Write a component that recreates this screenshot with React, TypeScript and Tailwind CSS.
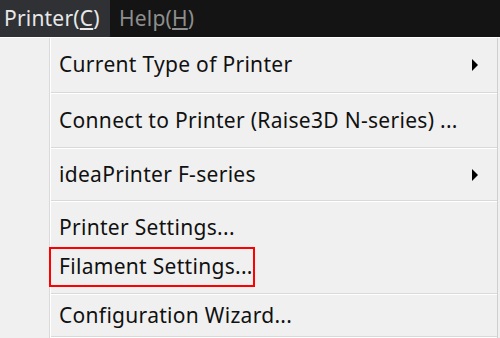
import React from "react";

const Arrow = () => (
  <svg width="8" height="12" viewBox="0 0 8 12" className="mr-[18px]">
    <path d="M1 0 L7 6 L1 12 Z" fill="#000" />
  </svg>
);

const Sep = () => (
  <div className="flex flex-col">
    <div className="h-px bg-[#d9d9d9]" />
    <div className="h-px bg-white" />
  </div>
);

export default function App() {
  return (
    <div
      className="w-[500px] h-[338px] overflow-hidden bg-[#f0f0f0] text-[#111]"
      style={{ fontFamily: '"Noto Sans", "Open Sans", sans-serif' }}
    >
      <div className="flex h-[37px] bg-[#141414] text-[21px] tracking-[0.2px] items-stretch">
        <div className="w-[110px] bg-[#2f3135] flex items-center pl-[4px] text-[#e8e8e8]">
          Printer(<span className="underline underline-offset-2">C</span>)
        </div>
        <div className="flex items-center pl-[9px] text-[#8e8e8e]">
          Help(<span className="underline underline-offset-2">H</span>)
        </div>
      </div>
      <div className="h-px bg-white" />
      <div className="flex h-[300px]">
        <div className="w-[50px] border-r border-[#dadada]" />
        <div className="flex-1 border-l border-white border-r border-r-[#d0d0d0] mr-[2px] flex flex-col text-[21px] tracking-[0.3px]">
          <div className="h-[54px] flex items-center justify-between pl-[8px]">
            <span>Current Type of Printer</span>
            <Arrow />
          </div>
          <Sep />
          <div className="h-[53px] flex items-center pl-[8px]">
            <span>Connect to Printer (Raise3D N-series) ...</span>
          </div>
          <Sep />
          <div className="h-[51px] flex items-center justify-between pl-[8px]">
            <span>ideaPrinter F-series</span>
            <Arrow />
          </div>
          <Sep />
          <div className="h-[45px] flex items-end pb-[4px] pl-[8px]">
            <span>Printer Settings...</span>
          </div>
          <div className="h-[40px] w-[206px] -ml-[2px] border-2 border-[#ff0000] flex items-center pl-[8px]">
            <span>Filament Settings...</span>
          </div>
          <div className="h-[6px]" />
          <Sep />
          <div className="h-[41px] flex items-center pl-[8px]">
            <span>Configuration Wizard...</span>
          </div>
          <Sep />
        </div>
      </div>
    </div>
  );
}
